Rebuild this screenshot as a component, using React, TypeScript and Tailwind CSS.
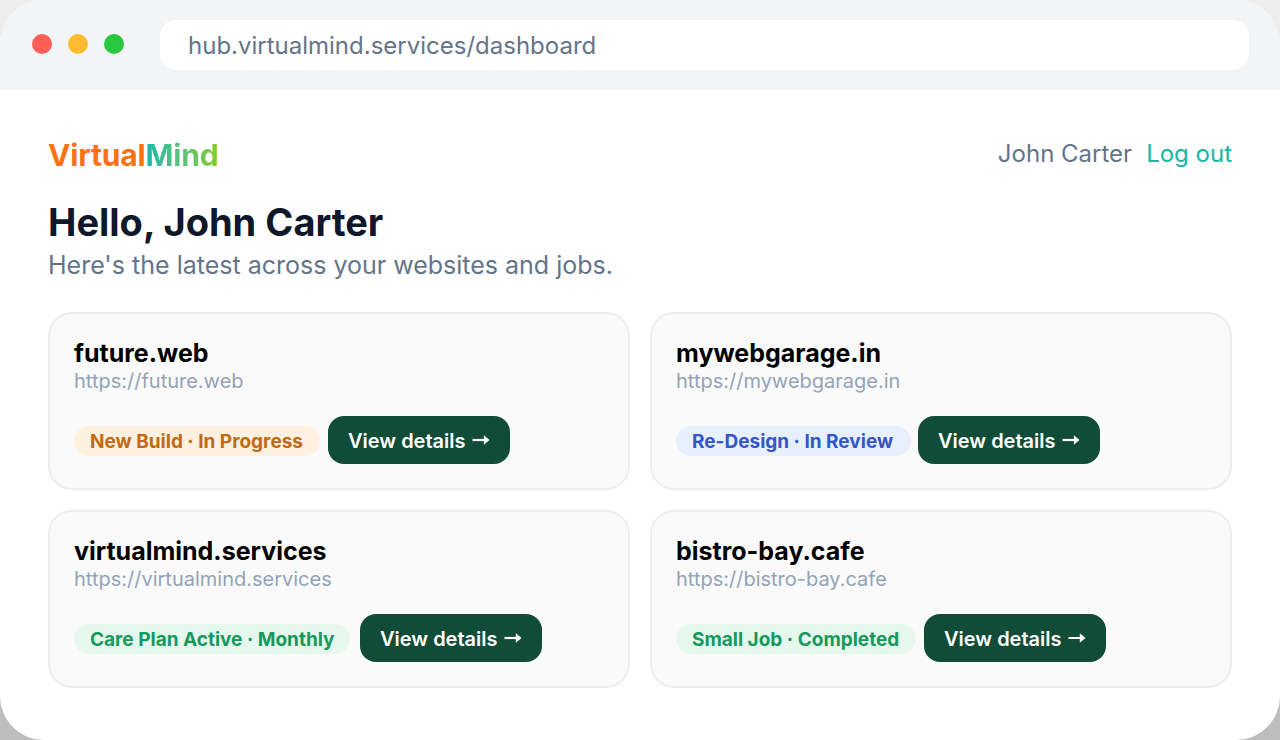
import React from "react";

const sites = [
  {
    name: "future.web",
    status: "New Build · In Progress",
    badge: "bg-[#fff0e0] text-[#c26a10] w-[246px]",
    gap: "gap-2",
  },
  {
    name: "mywebgarage.in",
    status: "Re-Design · In Review",
    badge: "bg-[#e8f0fe] text-[#3556c8] w-[235px]",
    gap: "gap-[7px]",
  },
  {
    name: "virtualmind.services",
    status: "Care Plan Active · Monthly",
    badge: "bg-[#e6f8ee] text-[#159a5c] w-[276px]",
    gap: "gap-2.5",
  },
  {
    name: "bistro-bay.cafe",
    status: "Small Job · Completed",
    badge: "bg-[#e6f8ee] text-[#159a5c] w-[240px]",
    gap: "gap-2",
  },
];

const BrowserBar = () => {
  return (
    <div className="flex h-[90px] items-start bg-[#f3f4f6] pl-8 pr-[31px] pt-5">
      <div className="mt-3.5 flex gap-4">
        <span className="h-5 w-5 rounded-full bg-[#ff5f57]" />
        <span className="h-5 w-5 rounded-full bg-[#febc2e]" />
        <span className="h-5 w-5 rounded-full bg-[#28c840]" />
      </div>
      <div className="ml-9 flex h-[50px] flex-1 items-center rounded-[16px] bg-white px-7 pt-0.5 text-2xl text-[#64748b]">
        <span>hub.virtualmind.services/dashboard</span>
      </div>
    </div>
  );
};

const ArrowIcon = () => {
  return (
    <svg width="18" height="12" viewBox="0 0 18 12" className="mb-0.5 ml-1.5">
      <path d="M0.5 6H13" stroke="currentColor" strokeWidth="2.2" />
      <path d="M11.8 1.2L17.5 6L11.8 10.8Z" fill="currentColor" />
    </svg>
  );
};

const SiteCard = ({ site }: { site: (typeof sites)[number] }) => {
  return (
    <div className="h-[178px] rounded-[24px] border-2 border-[#eeeeef] bg-[#fafafa] px-6 pt-6">
      <h2 className="text-[25px] font-bold leading-[30px] text-black">{site.name}</h2>
      <p className="text-[20px] leading-[26px] text-[#94a3b8]">https://{site.name}</p>
      <div className={`mt-[22px] flex items-center ${site.gap}`}>
        <span
          className={`mt-0.5 flex h-[30px] items-center whitespace-nowrap rounded-full px-4 pt-0.5 text-[19px] font-bold ${site.badge}`}
        >
          {site.status}
        </span>
        <button className="flex h-12 w-[182px] items-center whitespace-nowrap rounded-[16px] bg-[#114c38] pl-5 pt-0.5 text-[20px] font-semibold text-white">
          <span>View details</span>
          <ArrowIcon />
        </button>
      </div>
    </div>
  );
};

const App = () => {
  return (
    <div className="h-[740px] overflow-hidden bg-linear-to-b from-[#eeeeee] to-[#bdbdbd] font-['Inter',sans-serif]">
      <div className="h-[740px] overflow-hidden rounded-[44px] bg-white">
        <BrowserBar />
        <main className="px-12 pt-[46px]">
          <header className="flex h-[38px] items-center justify-between">
            <div className="text-[30px] font-bold leading-[38px] tracking-[-0.15px]">
              <span className="text-[#f97316]">Virtual</span>
              <span className="bg-linear-to-r from-[#14b8a6] to-[#84cc16] bg-clip-text text-transparent">
                Mind
              </span>
            </div>
            <div className="flex gap-3.5 pb-0.5 text-2xl leading-9">
              <span className="text-[#64748b]">John Carter</span>
              <span className="text-[#14b8a6]">Log out</span>
            </div>
          </header>
          <h1 className="mt-6 text-[38px] font-bold leading-[48px] text-[#0f172a]">
            <span>Hello, John Carter</span>
          </h1>
          <p className="mt-1 text-[25px] leading-[30px] text-[#64748b]">
            <span>Here's the latest across your websites and jobs.</span>
          </p>
          <div className="mt-8 grid grid-cols-2 gap-5">
            {sites.map((site) => (
              <SiteCard key={site.name} site={site} />
            ))}
          </div>
        </main>
      </div>
    </div>
  );
};

export default App;
